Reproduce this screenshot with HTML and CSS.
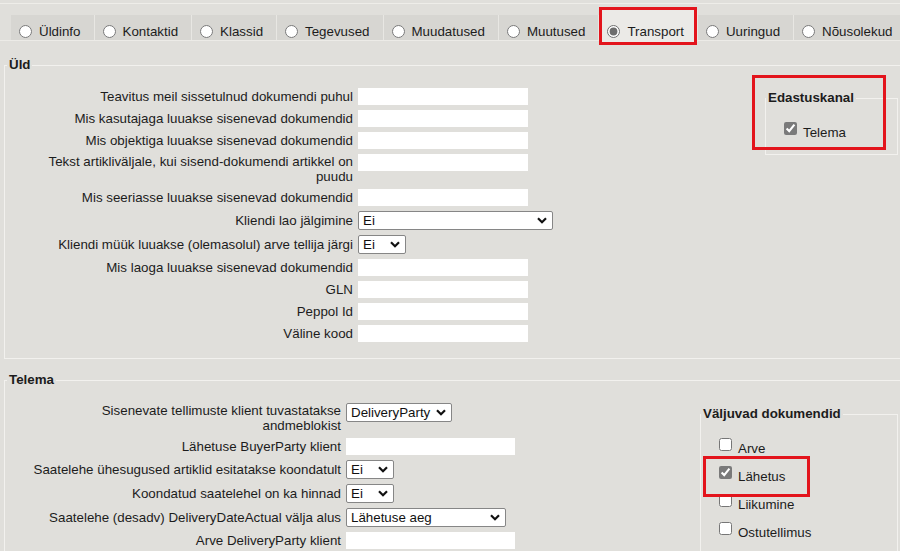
FILE: index.html
```html
<!DOCTYPE html>
<html lang="et">
<head>
<meta charset="utf-8">
<title>Transport</title>
<link rel="stylesheet" href="styles.css">
</head>
<body>
<div class="topline"></div>
<nav class="tabbar">
  <label class="tab"><input type="radio" name="tab"><span>Üldinfo</span></label>
  <label class="tab"><input type="radio" name="tab"><span>Kontaktid</span></label>
  <label class="tab"><input type="radio" name="tab"><span>Klassid</span></label>
  <label class="tab"><input type="radio" name="tab"><span>Tegevused</span></label>
  <label class="tab"><input type="radio" name="tab"><span>Muudatused</span></label>
  <label class="tab"><input type="radio" name="tab"><span>Muutused</span></label>
  <label class="tab active"><input type="radio" name="tab" checked><span>Transport</span></label>
  <label class="tab"><input type="radio" name="tab"><span>Uuringud</span></label>
  <label class="tab"><input type="radio" name="tab"><span>Nõusolekud</span></label>
</nav>

<fieldset class="group uld">
  <legend>Üld</legend>
  <div class="group-body">
    <div class="form">
      <label class="lbl">Teavitus meil sissetulnud dokumendi puhul</label>
      <input class="txt" type="text">
      <label class="lbl">Mis kasutajaga luuakse sisenevad dokumendid</label>
      <input class="txt" type="text">
      <label class="lbl">Mis objektiga luuakse sisenevad dokumendid</label>
      <input class="txt" type="text">
      <label class="lbl two">Tekst artikliväljale, kui sisend-dokumendi artikkel on<br>puudu</label>
      <input class="txt" type="text">
      <label class="lbl">Mis seeriasse luuakse sisenevad dokumendid</label>
      <input class="txt" type="text">
      <label class="lbl">Kliendi lao jälgimine</label>
      <span class="sel w-xl"><select><option>Ei</option></select><svg class="chev" viewBox="0 0 10 7"><path d="M1 1.3 L5 5.3 L9 1.3" fill="none" stroke="#111" stroke-width="2.2"/></svg></span>
      <label class="lbl">Kliendi müük luuakse (olemasolul) arve tellija järgi</label>
      <span class="sel w-s"><select><option>Ei</option></select><svg class="chev" viewBox="0 0 10 7"><path d="M1 1.3 L5 5.3 L9 1.3" fill="none" stroke="#111" stroke-width="2.2"/></svg></span>
      <label class="lbl">Mis laoga luuakse sisenevad dokumendid</label>
      <input class="txt" type="text">
      <label class="lbl">GLN</label>
      <input class="txt" type="text">
      <label class="lbl">Peppol Id</label>
      <input class="txt" type="text">
      <label class="lbl">Väline kood</label>
      <input class="txt" type="text">
    </div>
    <div class="side edastus">
      <fieldset class="sub sub-edastus">
        <legend>Edastuskanal</legend>
        <label class="chk"><input type="checkbox" checked><span>Telema</span></label>
      </fieldset>
    </div>
  </div>
</fieldset>

<fieldset class="group telema">
  <legend>Telema</legend>
  <div class="group-body">
    <div class="form">
      <label class="lbl two">Sisenevate tellimuste klient tuvastatakse<br>andmeblokist</label>
      <span class="sel w-dp"><select><option>DeliveryParty</option></select><svg class="chev" viewBox="0 0 10 7"><path d="M1 1.3 L5 5.3 L9 1.3" fill="none" stroke="#111" stroke-width="2.2"/></svg></span>
      <label class="lbl">Lähetuse BuyerParty klient</label>
      <input class="txt" type="text">
      <label class="lbl">Saatelehe ühesugused artiklid esitatakse koondatult</label>
      <span class="sel w-s"><select><option>Ei</option></select><svg class="chev" viewBox="0 0 10 7"><path d="M1 1.3 L5 5.3 L9 1.3" fill="none" stroke="#111" stroke-width="2.2"/></svg></span>
      <label class="lbl">Koondatud saatelehel on ka hinnad</label>
      <span class="sel w-s"><select><option>Ei</option></select><svg class="chev" viewBox="0 0 10 7"><path d="M1 1.3 L5 5.3 L9 1.3" fill="none" stroke="#111" stroke-width="2.2"/></svg></span>
      <label class="lbl">Saatelehe (desadv) DeliveryDateActual välja alus</label>
      <span class="sel w-l"><select><option>Lähetuse aeg</option></select><svg class="chev" viewBox="0 0 10 7"><path d="M1 1.3 L5 5.3 L9 1.3" fill="none" stroke="#111" stroke-width="2.2"/></svg></span>
      <label class="lbl">Arve DeliveryParty klient</label>
      <input class="txt" type="text">
    </div>
    <div class="side">
      <fieldset class="sub sub-valjuvad">
        <legend>Väljuvad dokumendid</legend>
        <label class="chk item"><input type="checkbox"><span>Arve</span></label>
        <label class="chk item marked"><input type="checkbox" checked><span>Lähetus</span></label>
        <label class="chk item"><input type="checkbox"><span>Liikumine</span></label>
        <label class="chk item"><input type="checkbox"><span>Ostutellimus</span></label>
      </fieldset>
    </div>
  </div>
</fieldset>
</body>
</html>
```

FILE: styles.css
```css
html, body {
  margin: 0;
  overflow: hidden;
}

body {
  width: 900px;
  height: 551px;
  background: #e0dfdb;
  font-family: "Liberation Sans", Arial, sans-serif;
  font-size: 13.33px;
  color: #1c1c1c;
}

/* top strip */
.topline {
  height: 3px;
  border-bottom: 1px solid #eeede9;
}

/* tabs */
.tabbar {
  display: flex;
  margin-top: 11px;
  padding-left: 11px;
  height: 25px;
  border-bottom: 1px solid #ecebe7;
  white-space: nowrap;
}

.tab {
  flex: none;
  display: flex;
  align-items: center;
  gap: 7px;
  box-sizing: border-box;
  height: 25px;
  padding: 7px 13px 0 8px;
  background: #d7d6d2;
  border-right: 1px solid #e8e7e3;
}

.tab input {
  margin: 0;
  width: 13px;
  height: 13px;
  flex: none;
  accent-color: #6d6d6d;
}

.tab.active {
  position: relative;
  height: 32px;
  margin-top: -5px;
  padding-top: 10px;
  background: #ebeae7;
}

.tab.active::after {
  content: "";
  position: absolute;
  left: 0;
  right: 0;
  top: -3px;
  bottom: -3px;
  border: 3px solid #e3141c;
}

/* groups */
fieldset.group {
  margin: 16px 0 0 4px;
  width: 1000px;
  box-sizing: border-box;
  border: 1px solid #f2f1ee;
  padding: 15px 0 16px 0;
  min-width: 0;
}

fieldset.group.telema {
  margin-top: 13px;
  padding: 15px 0 60px 0;
}

legend {
  font-weight: bold;
  padding: 0 2px;
  margin-left: 2px;
  line-height: 16px;
}

.group-body {
  display: flex;
  align-items: flex-start;
}

.form {
  flex: none;
  display: grid;
  grid-template-columns: 348px auto;
  column-gap: 5px;
  row-gap: 5px;
  width: 760px;
  align-items: start;
}

.uld .side {
  margin-top: 2px;
}

.telema .form {
  grid-template-columns: 336px auto;
  width: 695px;
}

.lbl {
  text-align: right;
  line-height: 15px;
  align-self: center;
}

.lbl.two {
  align-self: start;
}

.txt {
  justify-self: start;
  width: 170px;
  height: 17px;
  box-sizing: border-box;
  border: 0;
  padding: 0 4px;
  background: #fff;
  font: inherit;
}

.telema .txt {
  width: 169px;
}

/* selects */
.sel {
  justify-self: start;
  position: relative;
  display: block;
  height: 19px;
}

.sel select {
  appearance: none;
  -webkit-appearance: none;
  display: block;
  width: 100%;
  height: 19px;
  box-sizing: border-box;
  margin: 0;
  border: 1px solid #868686;
  border-radius: 2px;
  background: #fff;
  padding: 0 0 0 4px;
  font: inherit;
  color: #111;
}

.chev {
  position: absolute;
  right: 6px;
  top: 6px;
  width: 10px;
  height: 7px;
  pointer-events: none;
}

.w-xl { width: 195px; }
.w-s { width: 48px; }
.w-dp { width: 106px; }
.w-l { width: 160px; }

/* side boxes */
.side {
  flex: none;
  position: relative;
  margin-top: 3px;
}

fieldset.sub {
  margin: 0;
  box-sizing: border-box;
  border: 1px solid #f2f1ee;
  padding: 16px 0 14px 18px;
  min-width: 0;
}

.sub legend {
  margin-left: -18px;
}

.sub-edastus {
  width: 133px;
}

.edastus::after {
  content: "";
  position: absolute;
  left: -13px;
  top: -15px;
  width: 134px;
  height: 75px;
  box-sizing: border-box;
  border: 3px solid #e3141c;
  pointer-events: none;
}

.sub-valjuvad {
  width: 198px;
  padding-bottom: 40px;
}

.chk {
  display: flex;
  align-items: flex-start;
  gap: 6px;
}

.chk input {
  margin: 0;
  width: 13px;
  height: 13px;
  flex: none;
  accent-color: #7a7a7a;
}

.chk span {
  padding-top: 3px;
  line-height: 15px;
}

.chk.item {
  height: 28px;
}

.chk.marked {
  position: relative;
}

.chk.marked::after {
  content: "";
  position: absolute;
  left: -16px;
  top: -10px;
  width: 107px;
  height: 41px;
  box-sizing: border-box;
  border: 3px solid #e3141c;
  pointer-events: none;
}
```
